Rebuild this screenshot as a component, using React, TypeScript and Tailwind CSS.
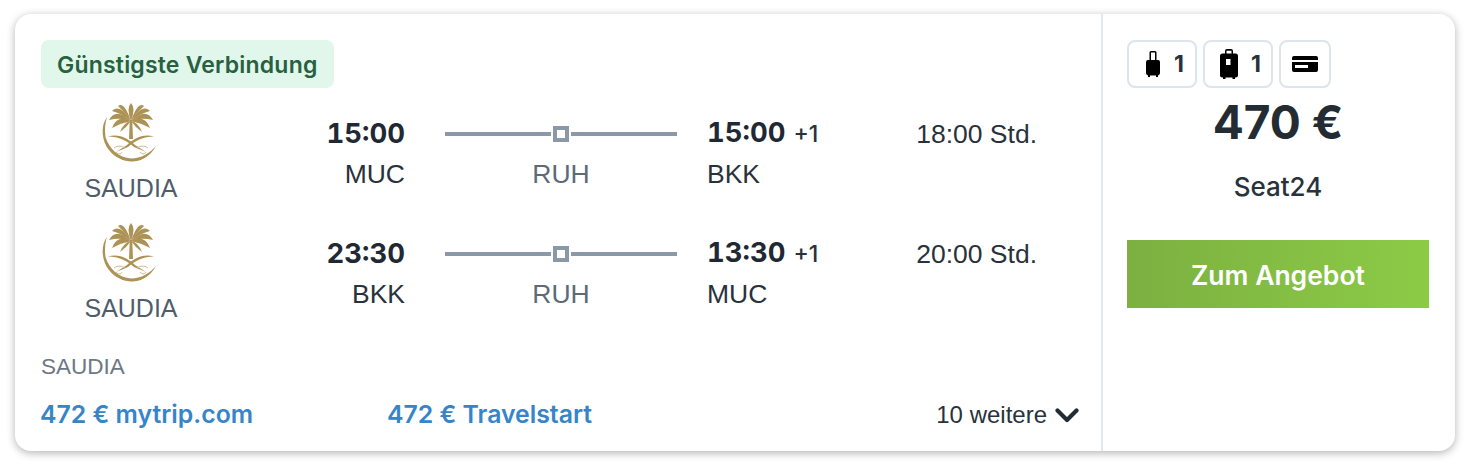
const FONT = "font-['Inter','Liberation_Sans',sans-serif]";
const HELV = "font-['Liberation_Sans',sans-serif]";

const fronds = [
  "M30 17 Q16 10 11 24 Q20 19 30 17Z",
  "M30 17 Q15 3 8 16 Q20 13 30 17Z",
  "M30 17 Q19 -1 11 7 Q22 10 30 17Z",
  "M30 17 Q23 -3 17 2 Q24 8 30 17Z",
  "M30 17 Q25 4 30 -1 Q35 4 30 17Z",
  "M30 17 Q37 -3 43 2 Q36 8 30 17Z",
  "M30 17 Q41 -1 49 7 Q38 10 30 17Z",
  "M30 17 Q45 3 52 16 Q40 13 30 17Z",
  "M30 17 Q44 10 49 24 Q40 19 30 17Z",
  "M30 17 Q23 18 19 28 Q26 23 30 17Z",
  "M30 17 Q37 18 41 28 Q34 23 30 17Z",
];

function SaudiaLogo() {
  return (
    <svg width="60" height="60" viewBox="0 0 60 60" aria-hidden="true" className="overflow-visible">
      <g fill="#ad9255">
        {fronds.map((d) => (
          <path key={d} d={d} />
        ))}
        <path d="M28.8 16 L31.2 16 L32 35 L28 35Z" />
        <path d="M6 13 C-1 22 1 38 8 46 C14 54 24 58 32 57.5 C42 57 50 51 55 42 C49 49 40 54.5 30 54.500 C18 53.500 8 45 4.500 33 C3.500 26 4 19 6 13Z" />
        <path d="M7 32.500 C18 29 28 35 34 41 L45 48 L33 43 C26 37 18 32.500 7 32.500Z" />
        <path d="M53 32.500 C42 29 32 35 26 41 L15 48 L27 43 C34 37 42 32.500 53 32.500Z" />
      </g>
      <g fill="none" stroke="#c9b88c" strokeWidth="1">
        <path d="M13 44 C17 41 21 42 24 44 M47 44 C43 41 39 42 36 44" />
        <path d="M15 48 C17 51 20 50 21 48 M45 48 C43 51 40 50 39 48" />
      </g>
    </svg>
  );
}

function Leg({ dep, from, arr, to, duration }: { dep: string; from: string; arr: string; to: string; duration: string }) {
  return (
    <div className="flex h-[120px]">
      <div className="-mt-[1px] flex w-[180px] flex-col items-center">
        <SaudiaLogo />
        <span className={`mt-[8px] text-[25px] leading-[32px] text-[#4f5d6b] ${HELV}`}>SAUDIA</span>
      </div>
      <div className="w-[184px] pt-[3px] text-right">
        <div className="text-[27.5px] font-bold leading-[50px] tabular-nums text-[#1f2933]">{dep}</div>
        <div className={`text-[26.500px] leading-[32px] text-[#29323b] ${HELV}`}>{from}</div>
      </div>
      <div className="ml-[40px] w-[232px] pt-[4px] text-center">
        <div className="flex h-[49px] items-center">
          <div className="h-[4px] flex-1 bg-[#8a98a7]" />
          <div className="mx-[2px] h-[16px] w-[16px] border-[4px] border-[#8a98a7] bg-white" />
          <div className="h-[4px] flex-1 bg-[#8a98a7]" />
        </div>
        <div className={`text-[26.500px] leading-[32px] text-[#5d6b78] ${HELV}`}>RUH</div>
      </div>
      <div className="ml-[30px] w-[170px] pt-[3px]">
        <div className="flex h-[50px] items-center gap-[8px]">
          <span className="text-[27.5px] font-bold tabular-nums text-[#1f2933]">{arr}</span>
          <span className="mt-[3px] text-[23px] font-medium text-[#29323b]">+1</span>
        </div>
        <div className={`text-[26.500px] leading-[32px] text-[#29323b] ${HELV}`}>{to}</div>
      </div>
      <div className={`w-[160px] pt-[4px] text-right text-[26.500px] leading-[50px] text-[#29323b] ${HELV}`}>{duration}</div>
    </div>
  );
}

export default function App() {
  return (
    <div className={`h-[468px] bg-white pb-[17px] pl-[15px] pr-[15px] pt-[14px] ${FONT}`}>
      <div className="flex h-[437px] rounded-[16px] bg-white shadow-[0_2px_8px_rgba(0,0,0,0.3)]">
        <div className="flex h-full w-[1088px] flex-col border-r-2 border-[#e4e9ee] pl-[26px] pr-[22px] pt-[26px]">
          <div className="h-[48px] w-fit rounded-[8px] bg-[#e2f7ec] px-[16px] pt-[1px] text-[23px] font-semibold leading-[48px] tracking-[0.2px] text-[#27613f]">
            Günstigste Verbindung
          </div>
          <div className="mt-[17px]">
            <Leg dep="15:00" from="MUC" arr="15:00" to="BKK" duration="18:00 Std." />
            <Leg dep="23:30" from="BKK" arr="13:30" to="MUC" duration="20:00 Std." />
          </div>
          <div className={`mt-[10px] text-[22.500px] leading-[24px] text-[#6d7884] ${HELV}`}>SAUDIA</div>
          <div className="mt-[21px] flex h-[30px] items-center text-[24.8px] font-semibold text-[#3585c8]">
            <span className="-ml-[1px] w-[347px]">472 € mytrip.com</span>
            <span>472 € Travelstart</span>
            <span className={`ml-auto flex items-center gap-[8px] text-[24px] font-normal text-[#29323b] ${HELV}`}>
              10 weitere
              <svg width="24" height="15" viewBox="0 0 24 15" aria-hidden="true">
                <path d="M2.500 2.500 L12 12 L21.500 2.500" fill="none" stroke="#242c33" strokeWidth="4.200" strokeLinecap="round" strokeLinejoin="round" />
              </svg>
            </span>
          </div>
        </div>
        <div className="flex flex-1 flex-col pl-[24px] pr-[26px] pt-[26px]">
          <div className="flex gap-[6px] text-[23px] font-bold text-[#29323b]">
            <div className="flex h-[48px] w-[70px] items-center gap-[14px] rounded-[8px] border-2 border-[#dde4eb] pl-[17px]">
              <svg width="14" height="26" viewBox="0 0 14 26" aria-hidden="true">
                <path fillRule="evenodd" d="M3.500 9V1.500A1.500 1.500 0 0 1 5 0h4a1.500 1.500 0 0 1 1.500 1.500V9H12a2 2 0 0 1 2 2v11a2.500 2.500 0 0 1-2 2.400V26h-2v-1.500H4V26H2v-1.600A2.500 2.500 0 0 1 0 22V11a2 2 0 0 1 2-2ZM5 9h4V1.500H5Z" />
              </svg>
              1
            </div>
            <div className="flex h-[48px] w-[70px] items-center gap-[13px] rounded-[8px] border-2 border-[#dde4eb] pl-[15px]">
              <svg width="18" height="30" viewBox="0 0 18 30" aria-hidden="true">
                <path fillRule="evenodd" d="M5 4.500V2a2 2 0 0 1 2-2h4a2 2 0 0 1 2 2v2.500h2.500A2.500 2.500 0 0 1 18 7v19a2.500 2.500 0 0 1-2.500 2.500H15V30h-2.500v-1.500h-7V30H3v-1.500h-.5A2.500 2.500 0 0 1 0 26V7a2.500 2.500 0 0 1 2.500-2.500ZM6.500 4.500h5V1.700h-5ZM6 10h4.500v6H6Z" />
              </svg>
              1
            </div>
            <div className="flex h-[48px] w-[52px] items-center justify-center rounded-[8px] border-2 border-[#dde4eb]">
              <svg width="26" height="16" viewBox="0 0 26 16" aria-hidden="true">
                <path fillRule="evenodd" d="M2 0h22a2 2 0 0 1 2 2v2H0V2a2 2 0 0 1 2-2ZM0 6h26v8a2 2 0 0 1-2 2H2a2 2 0 0 1-2-2ZM3 9v3h13V9Z" />
              </svg>
            </div>
          </div>
          <div className="text-center text-[46px] font-bold leading-[68px] text-[#242c33]">470 €</div>
          <div className="mt-[15px] text-center text-[26px] font-medium leading-[32px] text-[#29323b]">Seat24</div>
          <button type="button" className="mt-[37px] h-[68px] w-full bg-gradient-to-r from-[#7cb041] to-[#8ccb46] pt-[3px] text-[26.500px] font-semibold text-white">
            Zum Angebot
          </button>
        </div>
      </div>
    </div>
  );
}
